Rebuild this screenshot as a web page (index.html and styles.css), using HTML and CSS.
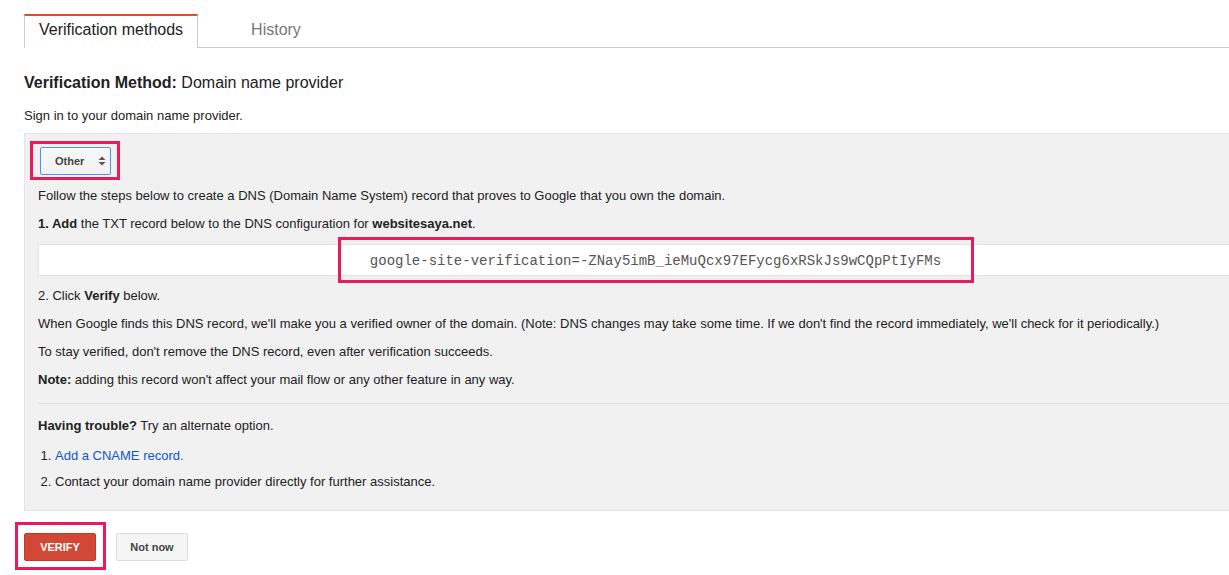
FILE: index.html
```html
<!DOCTYPE html>
<html>
<head>
    <title>Verification methods</title>
    <link rel="stylesheet" href="styles.css">
</head>
<body>
    <div class="page">
        <div class="tabs">
            <div class="tab active">Verification methods</div>
            <div class="tab history">History</div>
        </div>

        <h2 class="method"><b>Verification Method:</b> Domain name provider</h2>
        <p class="intro">Sign in to your domain name provider.</p>

        <div class="panel">
            <div class="select-wrap">
                <div class="select">
                    <span>Other</span>
                    <svg width="8" height="10" viewBox="0 0 8 10"><polygon points="0.5,4 4,0.5 7.5,4" fill="#555"/><polygon points="0.5,6 4,9.5 7.5,6" fill="#555"/></svg>
                </div>
                <span class="mark mark-select"></span>
            </div>

            <p>Follow the steps below to create a DNS (Domain Name System) record that proves to Google that you own the domain.</p>
            <p><b>1. Add</b> the TXT record below to the DNS configuration for <b>websitesaya.net</b>.</p>

            <div class="txt">
                <span class="code">google-site-verification=-ZNay5imB_ieMuQcx97EFycg6xRSkJs9wCQpPtIyFMs<span class="mark mark-code"></span></span>
            </div>

            <p>2. Click <b>Verify</b> below.</p>
            <p>When Google finds this DNS record, we'll make you a verified owner of the domain. (Note: DNS changes may take some time. If we don't find the record immediately, we'll check for it periodically.)</p>
            <p>To stay verified, don't remove the DNS record, even after verification succeeds.</p>
            <p><b>Note:</b> adding this record won't affect your mail flow or any other feature in any way.</p>

            <div class="rule"></div>

            <p><b>Having trouble?</b> Try an alternate option.</p>
            <ol class="alts">
                <li><a href="#">Add a CNAME record.</a></li>
                <li>Contact your domain name provider directly for further assistance.</li>
            </ol>
        </div>

        <div class="actions">
            <div class="btn-wrap">
                <button class="btn btn-red">VERIFY</button>
                <span class="mark mark-btn"></span>
            </div>
            <button class="btn btn-grey">Not now</button>
        </div>
    </div>
</body>
</html>
```

FILE: styles.css
```css
html { overflow: hidden; }
body { margin: 0; font-family: "Liberation Sans", Arial, sans-serif; font-size: 13px; line-height: 16px; color: #222; background: #fff; }
.page { padding: 14px 0 20px 24px; width: 1262px; }

.tabs { display: flex; height: 34px; box-sizing: border-box; border-bottom: 1px solid #ccc; }
.tab { height: 34px; box-sizing: border-box; padding: 5px 14px 9px; font-size: 16px; line-height: 18px; border-top: 2px solid transparent; }
.tab.active { background: #fff; border: 1px solid #ccc; border-top: 2px solid #dd4b39; border-bottom: none; color: #222; }
.tab.history { margin-left: 39px; color: #777; }

.method { margin: 26px 0 0; font-size: 16px; line-height: 18px; font-weight: normal; color: #222; }
.intro { margin: 16px 0 0; }

.panel { margin-top: 9px; padding: 13px 13px 20px; background: #f1f1f1; border: 1px solid #e5e5e5; border-right: none; }
.panel p { margin: 0 0 12px; }

.select-wrap { position: relative; display: inline-block; margin: 0 0 13px 2px; vertical-align: top; }
.select { display: flex; align-items: center; justify-content: space-between; width: 71px; height: 28px; box-sizing: border-box; padding: 0 4px 0 14px; border: 1px solid #4d90fe; border-radius: 2px; background: linear-gradient(#f8f8f8, #f1f1f1); font-size: 11px; font-weight: bold; color: #444; }
.select svg { display: block; }

.txt { margin: 1px 0 12px; padding: 8px 0 6px; background: #fff; border: 1px solid #e5e5e5; text-align: center; }
.code { position: relative; font-family: "Liberation Mono", "Courier New", monospace; font-size: 14px; line-height: 16px; color: #555; }

.rule { margin: 15px 0 14px; border-top: 1px solid #e0e0e0; }

.alts { margin: 14px 0 0; padding-left: 17px; }
.alts li { margin-bottom: 10px; }
.alts li:last-child { margin-bottom: 0; }
.alts a { color: #15c; text-decoration: none; }

.actions { display: flex; gap: 20px; margin-top: 22px; }
.btn-wrap { position: relative; }
.btn { display: block; min-width: 72px; height: 28px; box-sizing: border-box; padding: 0 12px; border-radius: 2px; font-family: "Liberation Sans", Arial, sans-serif; font-size: 11px; font-weight: bold; cursor: pointer; }
.btn-red { background: #d14836; border: 1px solid #c53727; color: #fff; }
.btn-grey { background: #f5f5f5; border: 1px solid #dcdcdc; color: #444; }

/* annotation frames drawn over the screenshot */
.mark { position: absolute; border: 3px solid #ea1a5b; pointer-events: none; }
.mark-select { top: -6px; left: -10px; right: -9px; bottom: -5px; }
.mark-code { top: -16px; left: -32px; right: -33px; bottom: -14px; }
.mark-btn { top: -11px; left: -9px; right: -10px; bottom: -9px; }
```
